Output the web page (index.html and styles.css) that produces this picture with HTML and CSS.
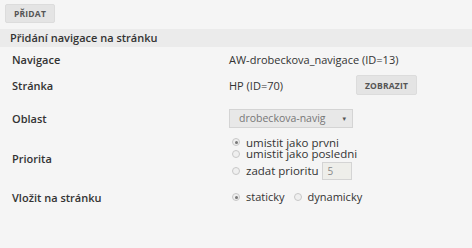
FILE: index.html
```html
<!DOCTYPE html>
<html>
<head>
<meta charset="utf-8">
<link rel="stylesheet" href="styles.css">
</head>
<body>
<div class="toolbar"><button class="btn">PŘIDAT</button></div>
<div class="head">Přidání navigace na stránku</div>
<div class="form">
  <div class="label r1">Navigace</div>
  <div class="val r1">AW-drobeckova_navigace (ID=13)</div>
  <div class="label r2">Stránka</div>
  <div class="val r2 page"><span class="pname">HP (ID=70)</span><button class="btn btn2">ZOBRAZIT</button></div>
  <div class="label r3">Oblast</div>
  <div class="val r3"><div class="select"><span>drobeckova-navig</span><span class="arrow">▾</span></div></div>
  <div class="label r4">Priorita</div>
  <div class="val r4">
    <div class="radios">
      <div class="opt"><span class="radio on"></span>umistit jako prvni</div>
      <div class="opt"><span class="radio"></span>umistit jako posledni</div>
      <div class="opt"><span class="radio"></span>zadat prioritu <span class="num">5</span></div>
    </div>
  </div>
  <div class="label r5">Vložit na stránku</div>
  <div class="val r5 inline"><span class="opt"><span class="radio on"></span>staticky</span><span class="opt"><span class="radio"></span>dynamicky</span></div>
</div>
</body>
</html>
```
FILE: styles.css
```css
html, body { margin: 0; padding: 0; }
body {
  background: #f5f5f5;
  font-family: "Open Sans", "DejaVu Sans", sans-serif;
  font-size: 11px;
  color: #333;
  width: 472px;
  height: 248px;
  overflow: hidden;
}
.toolbar { padding: 4px 5px 0; height: 27px; box-sizing: border-box; }
.btn {
  font-family: "Open Sans", sans-serif;
  font-weight: 700;
  font-size: 8.5px;
  color: #555;
  background: #e4e4e4;
  border: 1px solid #dcdcdc;
  border-radius: 2px;
  height: 19px;
  padding: 0 8px;
  letter-spacing: 0.2px;
}
.head {
  background: #ebebeb;
  height: 18px;
  line-height: 17px;
  padding-left: 10px;
  margin-top: 2px;
  font-weight: 600;
  font-size: 11px;
  color: #333;
}
.form {
  display: grid;
  grid-template-columns: 217px 1fr;
  grid-template-rows: 25px 26px 40px 40px 38px;
  padding-left: 12px;
}
.label { font-weight: 600; display: flex; align-items: center; }
.val { display: flex; align-items: center; }
.page .pname { width: 127px; }
.btn2 { height: 20px; padding: 0 8px; font-size: 8.5px; }
.select {
  width: 124px;
  height: 19px;
  box-sizing: border-box;
  border: 1px solid #d4d4d4;
  background: #e8e8e8;
  color: #777;
  display: flex;
  align-items: center;
  justify-content: space-between;
  padding: 0 6px 0 9px;
  font-size: 10.5px;
}
.arrow { font-size: 7px; color: #555; }
.radios { display: flex; flex-direction: column; font-size: 11.5px; }
.opt { display: flex; align-items: center; line-height: 11.5px; }
.radio {
  width: 6px; height: 6px;
  border: 1px solid #c8c8c8;
  border-radius: 50%;
  background: #efefef;
  margin: 0 6px 0 3px;
  box-sizing: content-box;
  position: relative;
  flex: none;
}
.radio.on::after {
  content: "";
  position: absolute;
  left: 1.5px; top: 1.5px;
  width: 3px; height: 3px;
  border-radius: 50%;
  background: #777;
}
.num {
  display: inline-block;
  width: 30px; height: 18px;
  box-sizing: border-box;
  border: 1px solid #d4d4d4;
  background: #eeeeea;
  color: #888;
  font-size: 10px;
  line-height: 16px;
  padding-left: 5px;
  margin-left: 3px;
}
.radios .opt:nth-child(3) { margin-top: 2px; }
.inline .opt { margin-right: 6px; }
```
